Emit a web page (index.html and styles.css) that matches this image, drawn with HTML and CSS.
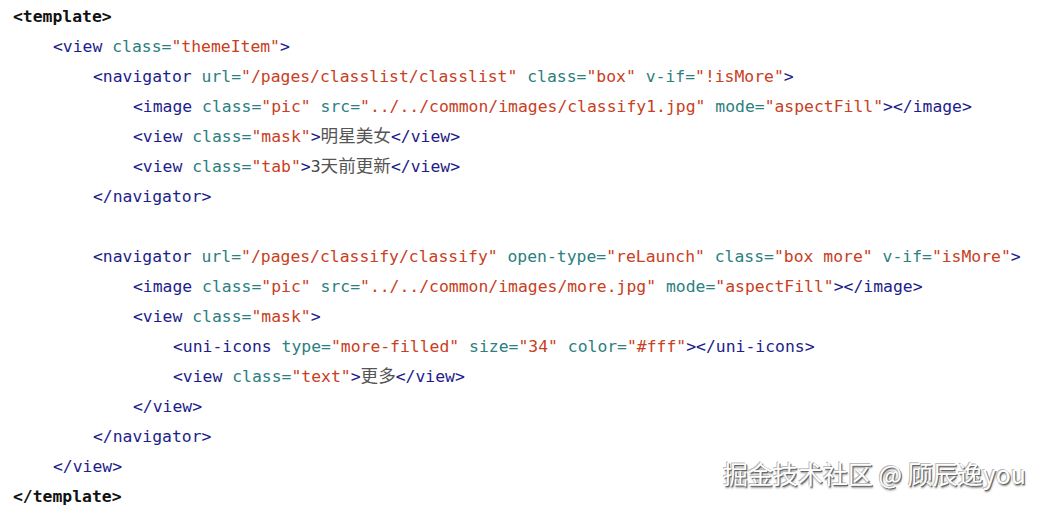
FILE: index.html
```html
<!DOCTYPE html>
<html lang="zh">
<head>
<meta charset="utf-8">
<link rel="stylesheet" href="styles.css">
</head>
<body>
<div class="code">
<div class="ln"><span class="root">&lt;template&gt;</span></div>
<div class="ln i1"><span class="t">&lt;view</span> <span class="a">class=</span><span class="v">"themeItem"</span><span class="t">&gt;</span></div>
<div class="ln i2"><span class="t">&lt;navigator</span> <span class="a">url=</span><span class="v">"/pages/classlist/classlist"</span> <span class="a">class=</span><span class="v">"box"</span> <span class="a">v-if=</span><span class="v">"!isMore"</span><span class="t">&gt;</span></div>
<div class="ln i3"><span class="t">&lt;image</span> <span class="a">class=</span><span class="v">"pic"</span> <span class="a">src=</span><span class="v">"../../common/images/classify1.jpg"</span> <span class="a">mode=</span><span class="v">"aspectFill"</span><span class="t">&gt;&lt;/image&gt;</span></div>
<div class="ln i3"><span class="t">&lt;view</span> <span class="a">class=</span><span class="v">"mask"</span><span class="t">&gt;</span><span class="cjk">明星美女</span><span class="t">&lt;/view&gt;</span></div>
<div class="ln i3"><span class="t">&lt;view</span> <span class="a">class=</span><span class="v">"tab"</span><span class="t">&gt;</span><span class="txt">3</span><span class="cjk">天前更新</span><span class="t">&lt;/view&gt;</span></div>
<div class="ln i2"><span class="t">&lt;/navigator&gt;</span></div>
<div class="ln"></div>
<div class="ln i2"><span class="t">&lt;navigator</span> <span class="a">url=</span><span class="v">"/pages/classify/classify"</span> <span class="a">open-type=</span><span class="v">"reLaunch"</span> <span class="a">class=</span><span class="v">"box more"</span> <span class="a">v-if=</span><span class="v">"isMore"</span><span class="t">&gt;</span></div>
<div class="ln i3"><span class="t">&lt;image</span> <span class="a">class=</span><span class="v">"pic"</span> <span class="a">src=</span><span class="v">"../../common/images/more.jpg"</span> <span class="a">mode=</span><span class="v">"aspectFill"</span><span class="t">&gt;&lt;/image&gt;</span></div>
<div class="ln i3"><span class="t">&lt;view</span> <span class="a">class=</span><span class="v">"mask"</span><span class="t">&gt;</span></div>
<div class="ln i4"><span class="t">&lt;uni-icons</span> <span class="a">type=</span><span class="v">"more-filled"</span> <span class="a">size=</span><span class="v">"34"</span> <span class="a">color=</span><span class="v">"#fff"</span><span class="t">&gt;&lt;/uni-icons&gt;</span></div>
<div class="ln i4"><span class="t">&lt;view</span> <span class="a">class=</span><span class="v">"text"</span><span class="t">&gt;</span><span class="cjk">更多</span><span class="t">&lt;/view&gt;</span></div>
<div class="ln i3"><span class="t">&lt;/view&gt;</span></div>
<div class="ln i2"><span class="t">&lt;/navigator&gt;</span></div>
<div class="ln i1"><span class="t">&lt;/view&gt;</span></div>
<div class="ln"><span class="root">&lt;/template&gt;</span></div>
</div>
<div class="wm">掘金技术社区 @ 顾辰逸you</div>
</body>
</html>
```

FILE: styles.css
```css
html, body {
  margin: 0;
  padding: 0;
  background: #ffffff;
}
body {
  width: 1044px;
  height: 505px;
  overflow: hidden;
  position: relative;
}
.code {
  padding: 2px 0 0 13px;
  font-family: "DejaVu Sans Mono", "Liberation Mono", monospace;
  font-size: 16.4px;
  color: #1d1d8c;
}
.ln {
  height: 30px;
  line-height: 30px;
  white-space: pre;
}
.i1 { padding-left: 40px; }
.i2 { padding-left: 80px; }
.i3 { padding-left: 120px; }
.i4 { padding-left: 160px; }
.root {
  color: #111111;
  font-weight: bold;
}
.t { color: #1d1d8c; }
.a { color: #2b8080; }
.v { color: #c8401e; }
.txt { color: #444444; }
.cjk {
  font-family: "Noto Sans CJK SC", sans-serif;
  font-size: 17.6px;
  line-height: 1;
  color: #555555;
}
.wm {
  position: absolute;
  right: 18px;
  bottom: 18px;
  font-family: "Noto Sans CJK SC", "Noto Sans", sans-serif;
  font-size: 25px;
  line-height: 28px;
  color: #ffffff;
  text-shadow: 1px 1px 0 #666666, -1px -1px 0 #bbbbbb, 1px 2px 2px #888888;
}
```
